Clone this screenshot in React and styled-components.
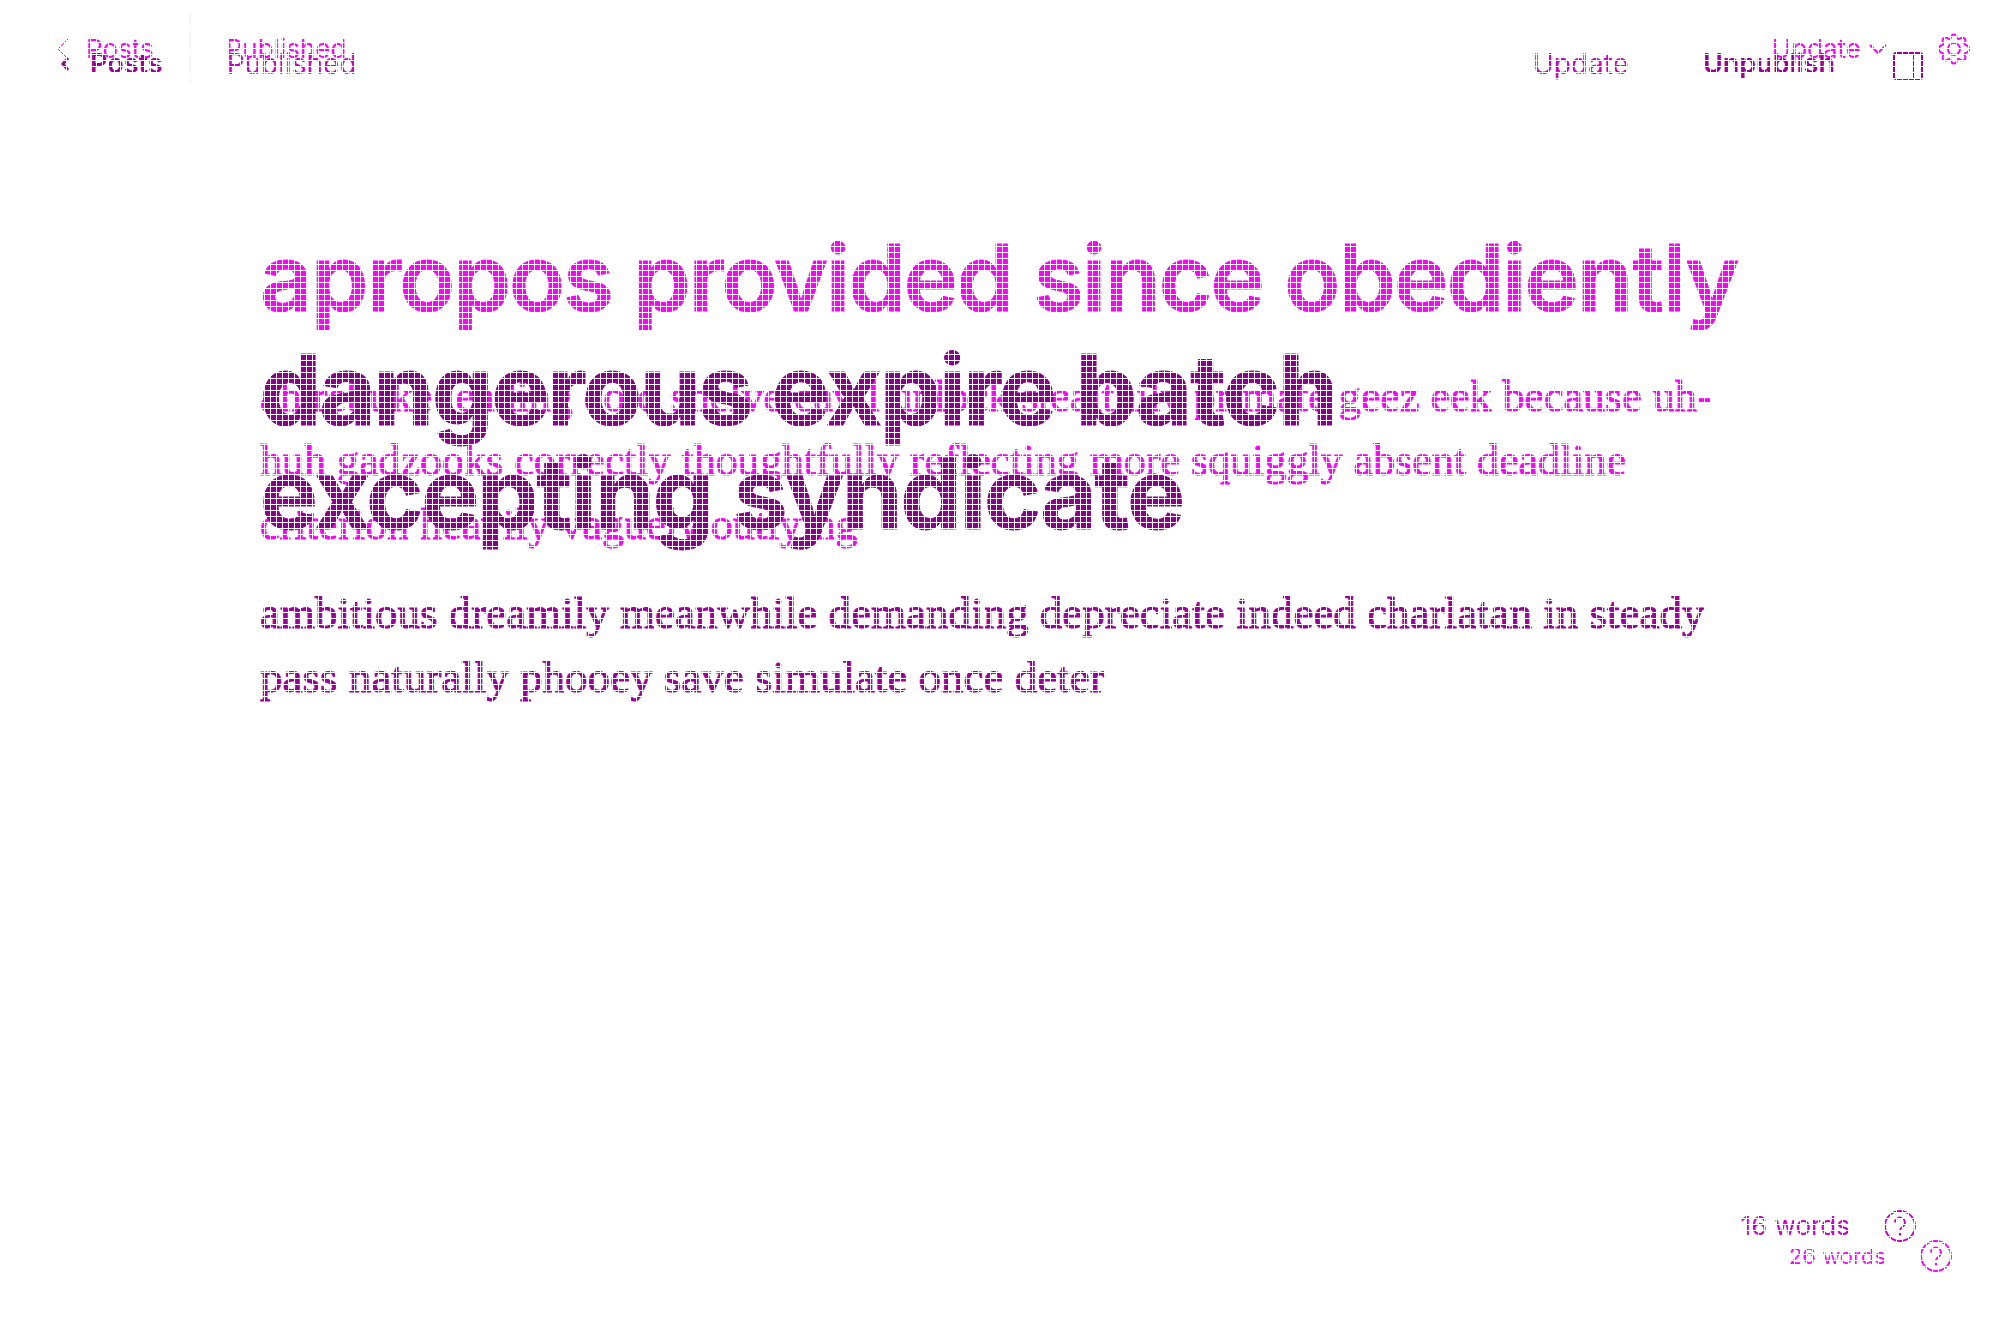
import React from "react";
import styled, { createGlobalStyle } from "styled-components";

const SANS = 'Inter, "Liberation Sans", sans-serif';
const SERIF = '"Liberation Serif", "Times New Roman", serif';
const OLD = "#ff00ff";
const INK = "#9b009b";
const SOFT = "#c800c8";

const GlobalStyle = createGlobalStyle`
  * { box-sizing: border-box; }
  body { margin: 0; background: #fff; }
`;

const Compare = styled.div`
  position: relative;
  display: grid;
  min-height: 100vh;
  &::after {
    content: "";
    position: absolute;
    inset: 0;
    pointer-events: none;
    background:
      linear-gradient(to right, #fff 1px, transparent 1px) 0 0 / 6px 6px,
      linear-gradient(to bottom, #fff 1px, transparent 1px) 0 0 / 6px 6px;
  }
`;

const Revision = styled.section`
  grid-area: 1 / 1;
  display: flex;
  flex-direction: column;
  min-width: 0;
  color: ${(p) => p.$color};
  font-family: ${SANS};
`;

const TopBar = styled.header`
  display: flex;
  align-items: center;
  justify-content: space-between;
  height: ${(p) => p.$height}px;
  padding: ${(p) => p.$pad};
`;

const Group = styled.div`
  display: flex;
  align-items: center;
  gap: ${(p) => p.$gap}px;
`;

const TextButton = styled.button`
  display: flex;
  align-items: center;
  gap: ${(p) => p.$gap || 0}px;
  padding: 0;
  border: 0;
  background: none;
  font: ${(p) => p.$weight || 400} ${(p) => p.$size || 26}px / 32px ${SANS};
  color: ${(p) => p.$color || "inherit"};
  cursor: pointer;
`;

const BackLink = styled.a`
  display: flex;
  align-items: center;
  gap: ${(p) => p.$gap}px;
  font: ${(p) => p.$weight || 400} ${(p) => p.$size}px / 32px ${SANS};
  color: inherit;
  text-decoration: none;
`;

const Status = styled.span`
  font-size: ${(p) => p.$size}px;
  line-height: 32px;
  color: ${(p) => p.$color || "inherit"};
`;

const Divider = styled.span`
  width: 2px;
  height: 72px;
  background: #f4f8f8;
`;

const Article = styled.article`
  flex: 1;
  padding: ${(p) => p.$top}px 220px 0 260px;
`;

const Title = styled.h1`
  margin: 0;
  font: ${(p) => p.$weight} ${(p) => p.$size}px / 104px ${SANS};
  letter-spacing: -0.02em;
  color: ${(p) => p.$color};
  -webkit-text-stroke: 1px currentColor;
`;

const Body = styled.p`
  margin: 35px 0 0;
  font: ${(p) => p.$size}px / 64px ${SERIF};
  -webkit-text-stroke: 1px currentColor;
`;

const Footer = styled.footer`
  display: flex;
  align-items: center;
  justify-content: flex-end;
  gap: 34px;
  padding: ${(p) => p.$pad};
  font-size: ${(p) => p.$size}px;
  line-height: 32px;
  color: ${(p) => p.$color};
`;

const Icon = styled.svg`
  display: block;
  fill: none;
  stroke: currentColor;
  stroke-width: ${(p) => p.$stroke || 2};
`;

const Help = () => (
  <TextButton aria-label="Help">
    <Icon width="32" height="32" viewBox="0 0 32 32">
      <circle cx="16" cy="16" r="15" />
      <path d="M11 12.500a5 5 0 1 1 8 4c-1.800 1.200-3 1.800-3 4M16 23v2.500" />
    </Icon>
  </TextButton>
);

const Gear = () => (
  <Icon width="32" height="32" viewBox="0 0 32 32">
    <circle cx="16" cy="16" r="6" />
    <path d="M13 4.500 C13.500 .5 18.500 .5 19 4.500 C19.500 6 21 6.500 22 5.500 C25.500 3 28.500 6 27 9 C26 10.500 26.500 12 28.500 12.300 C32 13.500 32 18.500 28.500 19.700 C26.500 20 26 21.500 27 23 C28.500 26 25.500 29 22 26.500 C21 25.500 19.500 26 19 27.500 C18.500 31.500 13.500 31.500 13 27.500 C12.500 26 11 25.500 10 26.500 C6.500 29 3.500 26 5 23 C6 21.500 5.500 20 3.500 19.700 C0 18.500 0 13.500 3.500 12.300 C5.500 12 6 10.500 5 9 C3.500 6 6.500 3 10 5.500 C11 6.500 12.500 6 13 4.500 Z" />
  </Icon>
);

export default function App() {
  return (
    <>
      <GlobalStyle />
      <Compare>
        <Revision $color={OLD}>
          <TopBar $height={98} $pad="0 30px 0 56px">
            <Group $gap={35}>
              <BackLink href="#posts" $gap={18} $size={26}>
                <Icon $stroke={1} width="12" height="22" viewBox="0 0 12 22"><path d="M12 1 2 11l10 10" /></Icon>
                Posts
              </BackLink>
              <Divider />
              <Status $size={26}>Published</Status>
            </Group>
            <Group $gap={51}>
              <TextButton $gap={8}>
                Update
                <Icon width="18" height="10" viewBox="0 0 18 10"><path d="m1 1 8 8 8-8" /></Icon>
              </TextButton>
              <TextButton aria-label="Settings"><Gear /></TextButton>
            </Group>
          </TopBar>
          <Article $top={128}>
            <Title $weight={600} $size={92} $color={OLD}>apropos provided since obediently</Title>
            <Body $size={44}>
              ah rebuke leading cold shelve cavil unlock stealthily primate geez eek because uh-<br />
              huh gadzooks correctly thoughtfully reflecting more squiggly absent deadline<br />
              criterion heavily vaguely outlying
            </Body>
          </Article>
          <Footer $size={22} $pad="0 48px 48px 0" $color={OLD}>
            <span>26 words</span>
            <Help />
          </Footer>
        </Revision>

        <Revision $color={INK}>
          <TopBar $height={128} $pad="0 77px 0 60px">
            <Group $gap={64}>
              <BackLink href="#posts" $gap={20} $size={27} $weight={600}>
                <Icon $stroke={3} width="10" height="16" viewBox="0 0 10 16"><path d="M8 2 3 8l5 6" /></Icon>
                Posts
              </BackLink>
              <Status $size={28} $color={SOFT}>Published</Status>
            </Group>
            <Group $gap={58}>
              <Group $gap={74}>
                <TextButton $size={28} $color={SOFT}>Update</TextButton>
                <TextButton $size={27} $weight={600}>Unpublish</TextButton>
              </Group>
              <TextButton aria-label="Toggle sidebar">
                <Icon width="30" height="32" viewBox="0 -4 30 32">
                  <rect x="1" y="1" width="28" height="26" rx="2" />
                  <path d="M21 2v24" />
                </Icon>
              </TextButton>
            </Group>
          </TopBar>
          <Article $top={210}>
            <Title $weight={700} $size={97} $color="#8b008b">
              dangerous expire batch<br />excepting syndicate
            </Title>
            <Body $size={45}>
              ambitious dreamily meanwhile demanding depreciate indeed charlatan in steady<br />
              pass naturally phooey save simulate once deter
            </Body>
          </Article>
          <Footer $size={26} $pad="0 84px 78px 0" $color={SOFT}>
            <span>16 words</span>
            <Help />
          </Footer>
        </Revision>
      </Compare>
    </>
  );
}
